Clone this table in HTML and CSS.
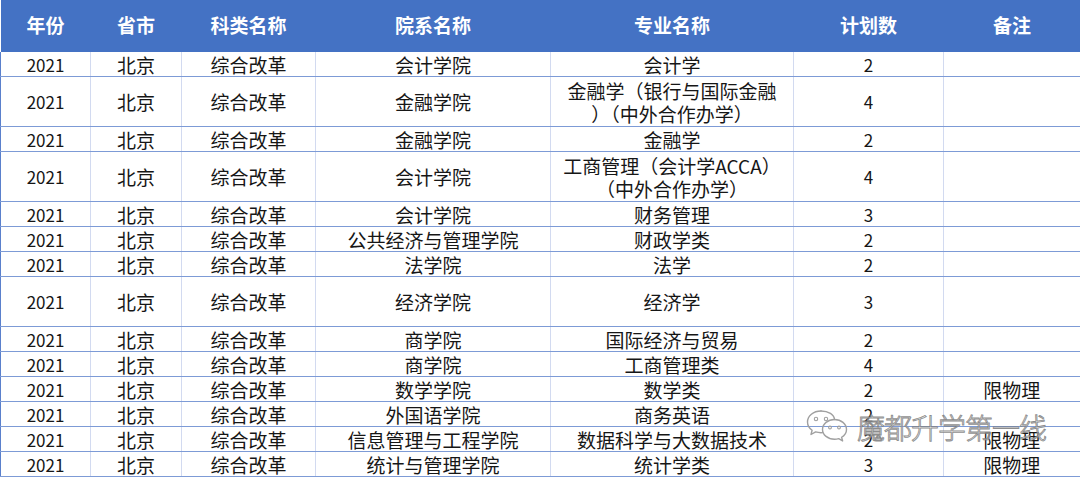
FILE: index.html
```html
<!DOCTYPE html>
<html lang="zh-CN">
<head>
<meta charset="utf-8">
<title>2021 北京 综合改革 招生计划</title>
<link rel="stylesheet" href="styles.css">
</head>
<body>
<div class="sheet">
  <table class="plan">
    <colgroup>
      <col class="c-year"><col class="c-prov"><col class="c-type"><col class="c-school"><col class="c-major"><col class="c-num"><col class="c-note">
    </colgroup>
    <thead>
      <tr class="head">
        <th>年份</th><th>省市</th><th>科类名称</th><th>院系名称</th><th>专业名称</th><th>计划数</th><th>备注</th>
      </tr>
    </thead>
    <tbody>
      <tr><td class="num">2021</td><td>北京</td><td>综合改革</td><td>会计学院</td><td>会计学</td><td class="num">2</td><td></td></tr>
      <tr class="tall"><td class="num">2021</td><td>北京</td><td>综合改革</td><td>金融学院</td><td>金融学（银行与国际金融<br>）（中外合作办学）</td><td class="num">4</td><td></td></tr>
      <tr><td class="num">2021</td><td>北京</td><td>综合改革</td><td>金融学院</td><td>金融学</td><td class="num">2</td><td></td></tr>
      <tr class="tall"><td class="num">2021</td><td>北京</td><td>综合改革</td><td>会计学院</td><td>工商管理（会计学ACCA）<br>（中外合作办学）</td><td class="num">4</td><td></td></tr>
      <tr><td class="num">2021</td><td>北京</td><td>综合改革</td><td>会计学院</td><td>财务管理</td><td class="num">3</td><td></td></tr>
      <tr><td class="num">2021</td><td>北京</td><td>综合改革</td><td>公共经济与管理学院</td><td>财政学类</td><td class="num">2</td><td></td></tr>
      <tr><td class="num">2021</td><td>北京</td><td>综合改革</td><td>法学院</td><td>法学</td><td class="num">2</td><td></td></tr>
      <tr class="tall"><td class="num">2021</td><td>北京</td><td>综合改革</td><td>经济学院</td><td>经济学</td><td class="num">3</td><td></td></tr>
      <tr><td class="num">2021</td><td>北京</td><td>综合改革</td><td>商学院</td><td>国际经济与贸易</td><td class="num">2</td><td></td></tr>
      <tr><td class="num">2021</td><td>北京</td><td>综合改革</td><td>商学院</td><td>工商管理类</td><td class="num">4</td><td></td></tr>
      <tr><td class="num">2021</td><td>北京</td><td>综合改革</td><td>数学学院</td><td>数学类</td><td class="num">2</td><td>限物理</td></tr>
      <tr><td class="num">2021</td><td>北京</td><td>综合改革</td><td>外国语学院</td><td>商务英语</td><td class="num">2</td><td></td></tr>
      <tr><td class="num">2021</td><td>北京</td><td>综合改革</td><td>信息管理与工程学院</td><td>数据科学与大数据技术</td><td class="num">2</td><td>限物理</td></tr>
      <tr><td class="num">2021</td><td>北京</td><td>综合改革</td><td>统计与管理学院</td><td>统计学类</td><td class="num">3</td><td>限物理</td></tr>
    </tbody>
  </table>
  <div class="watermark">
    <svg class="wm-logo" width="44" height="36" viewBox="0 0 44 36" aria-hidden="true">
      <path d="M15 2C7.3 2 1.5 7 1.5 13c0 3.4 1.8 6.3 4.6 8.3L5 25.5l4.6-2.6c1.6.5 3.5.8 5.4.8.5 0 1 0 1.5-.1" fill="none" stroke="#a0a0a0" stroke-width="1.4" stroke-linejoin="round" stroke-linecap="round"/>
      <path d="M28.5 10.5c-6.6 0-12 4.4-12 9.9s5.4 9.9 12 9.9c1.5 0 2.9-.2 4.2-.6l3.9 2.2-1-3.6c2.9-1.8 4.9-4.7 4.9-7.9 0-5.5-5.4-9.9-12-9.9z" fill="none" stroke="#a0a0a0" stroke-width="1.4" stroke-linejoin="round"/>
      <path d="M28.5 10.5c-.3-4.8-6-8.5-13.5-8.5" fill="none" stroke="#a0a0a0" stroke-width="1.4" stroke-linecap="round"/>
      <circle cx="10" cy="10" r="1.7" fill="none" stroke="#a0a0a0" stroke-width="1.1"/>
      <circle cx="20" cy="10" r="1.7" fill="none" stroke="#a0a0a0" stroke-width="1.1"/>
      <circle cx="24" cy="18.5" r="1.4" fill="none" stroke="#a0a0a0" stroke-width="1.1"/>
      <circle cx="33" cy="18.5" r="1.4" fill="none" stroke="#a0a0a0" stroke-width="1.1"/>
    </svg>
    <span class="wm-text">魔都升学第一线</span>
  </div>
</div>
</body>
</html>
```
FILE: styles.css
```css
html, body {
  margin: 0;
  padding: 0;
  background: #ffffff;
}

body {
  font-family: "Noto Sans CJK SC", "Noto Sans", sans-serif;
  color: #161616;
}

.sheet {
  position: relative;
  width: 1080px;
  height: 478px;
  overflow: hidden;
}

.plan {
  width: 1080px;
  border-collapse: collapse;
  table-layout: fixed;
  font-size: 19px;
}

.c-year { width: 90px; }
.c-prov { width: 91px; }
.c-type { width: 134px; }
.c-school { width: 235px; }
.c-major { width: 243px; }
.c-num { width: 150px; }
.c-note { width: 137px; }

.head th {
  height: 50px;
  padding: 0 0 2px;
  background: #4472c4;
  color: #ffffff;
  font-weight: 700;
  font-size: 19px;
  text-align: center;
  border: none;
  line-height: 24px;
}

.plan td {
  height: 24px;
  padding: 0;
  text-align: center;
  vertical-align: middle;
  line-height: 23px;
  white-space: nowrap;
  border-left: 1px solid #d2daf0;
  border-right: 1px solid #d2daf0;
  border-bottom: 1px solid #7d9bd6;
}

.plan td:first-child {
  border-left: 1px solid #5a80cc;
}

.plan td:last-child {
  border-right: 2px solid #5a80cc;
}

.plan tr.tall td {
  height: 49px;
}

.plan td.num {
  font-size: 17px;
}

.watermark {
  position: absolute;
  left: 806px;
  top: 409px;
  display: flex;
  align-items: center;
  gap: 7px;
  pointer-events: none;
}

.wm-text {
  font-family: "Noto Sans CJK SC", sans-serif;
  font-size: 28px;
  font-weight: 300;
  letter-spacing: -1px;
  color: rgba(255, 255, 255, 0.6);
  -webkit-text-stroke: 0.9px rgba(120, 120, 120, 0.85);
  line-height: 34px;
}
```
